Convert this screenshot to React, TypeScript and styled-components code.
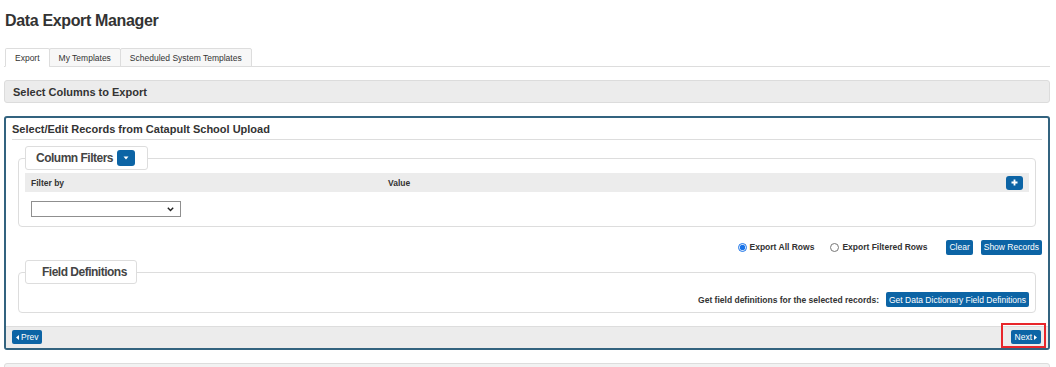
import React from "react";
import styled, { createGlobalStyle } from "styled-components";

const Global = createGlobalStyle`
  html, body { margin: 0; padding: 0; background: #fff; }
  body { font-family: "Liberation Sans", Arial, sans-serif; color: #333; }
  * { box-sizing: border-box; }
`;

const BLUE = "#0c64a5";

const Page = styled.div`
  padding: 0 6px 0 4px;
`;

const Title = styled.h1`
  margin: 12px 0 0 1px;
  font-size: 16px;
  line-height: 18px;
  font-weight: bold;
  letter-spacing: -0.35px;
  color: #333;
`;

const TabBar = styled.div`
  display: flex;
  margin-top: 18px;
  padding-left: 1px;
  border-bottom: 1px solid #ddd;
`;

const Tab = styled.div<{ $active?: boolean }>`
  height: 19px;
  margin-bottom: -1px;
  padding: 0 9px;
  display: flex;
  align-items: center;
  font-size: 8.5px;
  color: #333;
  background: ${(p) => (p.$active ? "#fff" : "#f7f7f7")};
  border: 1px solid #ddd;
  border-bottom-color: ${(p) => (p.$active ? "#fff" : "#ddd")};
  border-radius: 2px 2px 0 0;
  & + & {
    margin-left: -1px;
  }
`;

const SectionBar = styled.div`
  margin-top: 13px;
  height: 23px;
  padding: 0 8px;
  display: flex;
  align-items: center;
  background: #ececec;
  border: 1px solid #dcdcdc;
  border-radius: 3px;
  font-size: 11px;
  font-weight: bold;
  color: #333;
`;

const Panel = styled.div`
  margin-top: 13px;
  border: 2px solid #33637f;
  border-radius: 3px;
`;

const PanelHeader = styled.div`
  margin: 0 6px;
  height: 22px;
  display: flex;
  align-items: center;
  border-bottom: 1px solid #ddd;
  font-size: 11px;
  font-weight: bold;
  color: #333;
`;

const PanelBody = styled.div`
  padding: 0 6px 13px;
`;

const Fieldset = styled.fieldset<{ $top: number; $pt: number; $pb: number }>`
  margin: ${(p) => p.$top}px 6px 0;
  padding: ${(p) => p.$pt}px 6px ${(p) => p.$pb}px;
  border: 1px solid #ddd;
  border-radius: 4px;
  min-width: 0;
`;

const Legend = styled.legend`
  margin: 0;
  padding: 0;
`;

const LegendBox = styled.span<{ $pl: number; $pr: number }>`
  display: inline-flex;
  align-items: center;
  gap: 4px;
  height: 24px;
  padding: 0 ${(p) => p.$pr}px 0 ${(p) => p.$pl}px;
  border: 1px solid #ddd;
  border-radius: 3px;
  background: #fff;
  font-size: 12px;
  letter-spacing: -0.5px;
  font-weight: bold;
  color: #444;
`;

const IconButton = styled.button<{ $w: number; $h: number }>`
  width: ${(p) => p.$w}px;
  height: ${(p) => p.$h}px;
  padding: 0;
  display: inline-flex;
  align-items: center;
  justify-content: center;
  background: ${BLUE};
  border: none;
  border-radius: 3px;
`;

const FilterHead = styled.div`
  height: 19px;
  padding: 0 6px;
  display: flex;
  align-items: center;
  background: #ececec;
  font-size: 8.5px;
  font-weight: bold;
  color: #333;
`;

const HeadCell = styled.span<{ $w?: number }>`
  width: ${(p) => (p.$w ? `${p.$w}px` : "auto")};
  flex: ${(p) => (p.$w ? "none" : "1")};
`;

const SelectRow = styled.div`
  margin-top: 9px;
  padding-left: 6px;
  display: flex;
`;

const SelectBox = styled.label`
  width: 150px;
  height: 16px;
  padding: 0 6px 0 0;
  display: flex;
  align-items: center;
  border: 1px solid #8f8f8f;
  background: #fff;
`;

const Select = styled.select`
  flex: 1;
  min-width: 0;
  height: 100%;
  padding: 0 2px;
  border: none;
  outline: none;
  appearance: none;
  background: transparent;
  font-size: 9px;
  font-family: "Liberation Sans", Arial, sans-serif;
`;

const ActionRow = styled.div`
  margin-top: 12px;
  height: 16px;
  display: flex;
  align-items: center;
  justify-content: flex-end;
`;

const RadioLabel = styled.label<{ $gap: number }>`
  display: inline-flex;
  align-items: center;
  gap: 3px;
  margin-right: ${(p) => p.$gap}px;
  font-size: 8.5px;
  font-weight: bold;
  color: #333;
`;

const Radio = styled.input`
  width: 9px;
  height: 9px;
  margin: 0;
  accent-color: #1a73e8;
`;

const Button = styled.button<{ $ml?: number; $px?: number; $h?: number }>`
  height: ${(p) => p.$h ?? 15}px;
  margin-left: ${(p) => p.$ml ?? 0}px;
  padding: 0 ${(p) => p.$px ?? 3}px;
  display: inline-flex;
  align-items: center;
  gap: 2px;
  background: ${BLUE};
  color: #fff;
  border: none;
  border-radius: 2px;
  font-family: "Liberation Sans", Arial, sans-serif;
  font-size: 8.5px;
  white-space: nowrap;
`;

const DefRow = styled.div`
  display: flex;
  align-items: center;
  justify-content: flex-end;
  gap: 7px;
  font-size: 8.5px;
  font-weight: bold;
  color: #333;
`;

const Footer = styled.div`
  height: 22px;
  padding: 3px 7px 0 6px;
  display: flex;
  align-items: flex-start;
  justify-content: space-between;
  background: #ececec;
  border-top: 1px solid #ddd;
  border-radius: 0 0 1px 1px;
`;

const Highlight = styled.span`
  position: relative;
  display: inline-flex;
  &::after {
    content: "";
    position: absolute;
    top: -7px;
    left: -10px;
    right: -5px;
    bottom: -4px;
    border: 2px solid #e8262b;
    pointer-events: none;
  }
`;

const BottomBar = styled.div`
  margin-top: 13px;
  height: 23px;
  background: #f2f2f2;
  border: 1px solid #ddd;
  border-radius: 3px;
`;

const Caret = () => (
  <svg width="6" height="4" viewBox="0 0 6 4">
    <path d="M0.5 0.5 L5.5 0.5 L3 3.5 Z" fill="#fff" />
  </svg>
);

const Plus = () => (
  <svg width="7" height="7" viewBox="0 0 7 7">
    <path d="M3.5 0.5 V6.5 M0.5 3.5 H6.5" stroke="#fff" strokeWidth="1.8" />
  </svg>
);

const Chevron = () => (
  <svg width="7" height="5" viewBox="0 0 7 5">
    <path d="M0.8 0.8 L3.5 3.6 L6.2 0.8" fill="none" stroke="#222" strokeWidth="1.4" />
  </svg>
);

const TriLeft = () => (
  <svg width="3" height="5" viewBox="0 0 3 5">
    <path d="M3 0 L0 2.5 L3 5 Z" fill="#fff" />
  </svg>
);

const TriRight = () => (
  <svg width="3" height="5" viewBox="0 0 3 5">
    <path d="M0 0 L3 2.5 L0 5 Z" fill="#fff" />
  </svg>
);

export default function App() {
  return (
    <>
      <Global />
      <Page>
        <Title>Data Export Manager</Title>
        <TabBar>
          <Tab $active>Export</Tab>
          <Tab>My Templates</Tab>
          <Tab>Scheduled System Templates</Tab>
        </TabBar>

        <SectionBar>Select Columns to Export</SectionBar>

        <Panel>
          <PanelHeader>Select/Edit Records from Catapult School Upload</PanelHeader>
          <PanelBody>
            <Fieldset $top={6} $pt={3} $pb={9}>
              <Legend>
                <LegendBox $pl={10} $pr={12}>
                  Column Filters
                  <IconButton $w={18} $h={16} type="button" aria-label="Filter options">
                    <Caret />
                  </IconButton>
                </LegendBox>
              </Legend>
              <FilterHead>
                <HeadCell $w={357}>Filter by</HeadCell>
                <HeadCell>Value</HeadCell>
                <IconButton $w={17} $h={14} type="button" aria-label="Add filter">
                  <Plus />
                </IconButton>
              </FilterHead>
              <SelectRow>
                <SelectBox>
                  <Select defaultValue="">
                    <option value=""></option>
                  </Select>
                  <Chevron />
                </SelectBox>
              </SelectRow>
            </Fieldset>

            <ActionRow>
              <RadioLabel $gap={16}>
                <Radio type="radio" name="rows" defaultChecked />
                Export All Rows
              </RadioLabel>
              <RadioLabel $gap={19}>
                <Radio type="radio" name="rows" />
                Export Filtered Rows
              </RadioLabel>
              <Button type="button">Clear</Button>
              <Button type="button" $ml={8}>Show Records</Button>
            </ActionRow>

            <Fieldset $top={5} $pt={8} $pb={5}>
              <Legend>
                <LegendBox $pl={16} $pr={9}>Field Definitions</LegendBox>
              </Legend>
              <DefRow>
                Get field definitions for the selected records:
                <Button type="button">Get Data Dictionary Field Definitions</Button>
              </DefRow>
            </Fieldset>
          </PanelBody>
          <Footer>
            <Button type="button" $px={4} $h={14}>
              <TriLeft />
              Prev
            </Button>
            <Highlight>
              <Button type="button" $px={4} $h={14}>
                Next
                <TriRight />
              </Button>
            </Highlight>
          </Footer>
        </Panel>

        <BottomBar />
      </Page>
    </>
  );
}
